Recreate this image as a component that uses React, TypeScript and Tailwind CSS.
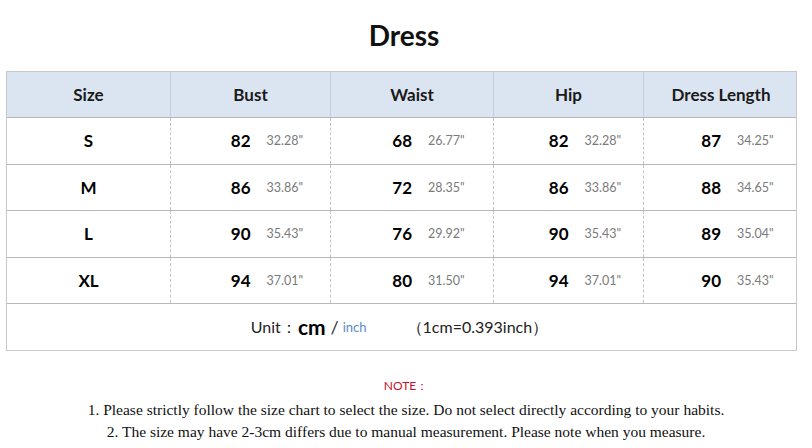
const rows = [
  { size: 'S', bust: [82, '32.28"'], waist: [68, '26.77"'], hip: [82, '32.28"'], len: [87, '34.25"'] },
  { size: 'M', bust: [86, '33.86"'], waist: [72, '28.35"'], hip: [86, '33.86"'], len: [88, '34.65"'] },
  { size: 'L', bust: [90, '35.43"'], waist: [76, '29.92"'], hip: [90, '35.43"'], len: [89, '35.04"'] },
  { size: 'XL', bust: [94, '37.01"'], waist: [80, '31.50"'], hip: [94, '37.01"'], len: [90, '35.43"'] },
];

const cols = 'grid grid-cols-[163px_160px_163px_150px_155px]';

const Value = ({ v }: { v: (string | number)[] }) => (
  <div className="grid grid-cols-2 items-center h-full border-l border-dashed border-[#c4c4c4]">
    <span className="text-right text-[17px] font-bold text-black">{v[0]}</span>
    <span className="pl-[16px] text-[12.5px] text-[#7a7a7a] pt-[2px]">{v[1]}</span>
  </div>
);

const App = () => {
  return (
    <div className="w-[812px] h-[448px] bg-white font-['Lato','Open_Sans',sans-serif] overflow-hidden">
      <h1 className="text-center font-bold text-[28px] text-[#111] pt-[14px] h-[71px] leading-[42px] pr-[4px]">Dress</h1>
      <div className="ml-[6px] w-[791px] border border-[#c8c8c8]">
        <div className={`${cols} h-[46px] bg-[#dbe5f1] border-b border-[#b8b8b8] text-[17px] font-bold text-[#1a1a1a]`}>
          {['Size', 'Bust', 'Waist', 'Hip', 'Dress Length'].map((h, i) => (
            <div key={h} className={`flex items-center justify-center ${i > 0 ? 'border-l border-[#c4cfdc]' : ''}`}>
              {h}
            </div>
          ))}
        </div>
        {rows.map((r) => (
          <div key={r.size} className={`${cols} h-[46.5px] border-b border-[#b8b8b8]`}>
            <div className="flex items-center justify-center text-[17px] font-bold text-black">{r.size}</div>
            <Value v={r.bust} />
            <Value v={r.waist} />
            <Value v={r.hip} />
            <Value v={r.len} />
          </div>
        ))}
        <div className="h-[46px] flex items-center justify-center text-[16px] text-[#222] pr-[4px]">
          <span>Unit：</span>
          <span className="font-bold text-[21px] text-black ml-[1px]">cm</span>
          <span className="text-[18px] ml-[5px] text-[#333]">/</span>
          <span className="text-[13px] text-[#5b8ac6] ml-[4px] pt-[2px]">inch</span>
          <span className="ml-[40px]">（1cm=0.393inch）</span>
        </div>
      </div>
      <div className="text-center mt-[26px] font-['Liberation_Serif',serif] text-[#111]">
        <div className="font-['Lato',sans-serif] text-[12px] text-[#c8102e] leading-[18px]">NOTE：</div>
        <p className="text-[15.5px] leading-[22px] mt-[4px]">
          1. Please strictly follow the size chart to select the size. Do not select directly according to your habits.
        </p>
        <p className="text-[15.5px] leading-[22px]">
          2. The size may have 2-3cm differs due to manual measurement. Please note when you measure.
        </p>
      </div>
    </div>
  );
};

export default App;
